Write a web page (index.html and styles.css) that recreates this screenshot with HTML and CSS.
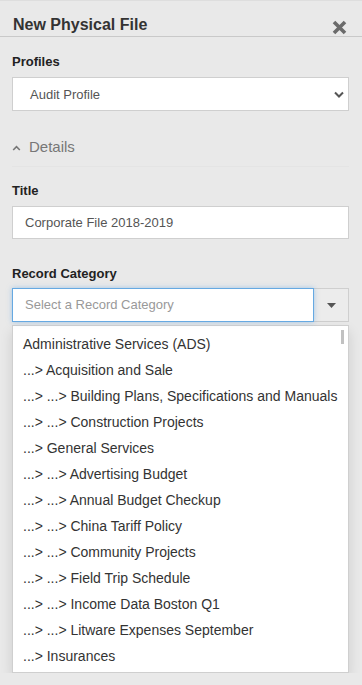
FILE: index.html
```html
<!DOCTYPE html>
<html lang="en">
<head>
  <meta charset="UTF-8" />
  <meta name="viewport" content="width=device-width, initial-scale=1" />
  <title>New Physical File</title>
  <link rel="stylesheet" href="styles.css">
</head>
<body>

  <div class="panel">
    <header class="panel-head">
      <h1>New Physical File</h1>
      <button class="close" aria-label="Close">
        <svg width="15" height="15" viewBox="0 0 15 15">
          <path d="M2 2 L13 13 M13 2 L2 13" stroke="#6b6b6b" stroke-width="3.6" fill="none" />
        </svg>
      </button>
    </header>

    <div class="panel-body">
      <div class="field">
        <label>Profiles</label>
        <div class="select">
          <span>Audit Profile</span>
          <svg width="10" height="7" viewBox="0 0 10 7">
            <path d="M1 1.5 L5 5.5 L9 1.5" stroke="#555" stroke-width="2" fill="none" />
          </svg>
        </div>
      </div>

      <div class="toggle">
        <svg width="9" height="6" viewBox="0 0 9 6">
          <path d="M1.2 5 L4.5 1.7 L7.8 5" stroke="#777" stroke-width="1.6" fill="none" />
        </svg>
        <span>Details</span>
      </div>

      <div class="field field-title">
        <label>Title</label>
        <div class="input">Corporate File 2018-2019</div>
      </div>

      <div class="field field-category">
        <label>Record Category</label>
        <div class="combo">
          <div class="combo-input">Select a Record Category</div>
          <div class="combo-btn">
            <svg width="9" height="5" viewBox="0 0 9 5"><path d="M0 0 L9 0 L4.5 5 Z" fill="#555" /></svg>
          </div>
        </div>
        <ul class="options">
          <li>Administrative Services (ADS)</li>
          <li>...&gt; Acquisition and Sale</li>
          <li>...&gt; ...&gt; Building Plans, Specifications and Manuals</li>
          <li>...&gt; ...&gt; Construction Projects</li>
          <li>...&gt; General Services</li>
          <li>...&gt; ...&gt; Advertising Budget</li>
          <li>...&gt; ...&gt; Annual Budget Checkup</li>
          <li>...&gt; ...&gt; China Tariff Policy</li>
          <li>...&gt; ...&gt; Community Projects</li>
          <li>...&gt; ...&gt; Field Trip Schedule</li>
          <li>...&gt; ...&gt; Income Data Boston Q1</li>
          <li>...&gt; ...&gt; Litware Expenses September</li>
          <li>...&gt; Insurances</li>
        </ul>
      </div>
    </div>
  </div>

</body>
</html>
```

FILE: styles.css
```css
body {
  margin: 0;
  font-family: 'Liberation Sans', Arial, sans-serif;
  background-color: #e9e9e9;
  color: #333;
  overflow: hidden;
}

.panel {
  border-top: 1px solid #dedede;
}

.panel-head {
  display: flex;
  justify-content: space-between;
  align-items: flex-start;
  padding: 14px 15px 1px 13px;
  border-bottom: 1px solid #c9c9c9;
}

.panel-head h1 {
  margin: 0;
  font-size: 16px;
  line-height: 20px;
  font-weight: bold;
  color: #333;
}

.close {
  margin-top: 5px;
  padding: 0;
  border: none;
  background: none;
  width: 15px;
  height: 15px;
}

.close svg {
  display: block;
}

.panel-body {
  padding: 0 13px 0 12px;
}

.field label {
  display: block;
  font-size: 13px;
  line-height: 16px;
  font-weight: bold;
  color: #222;
  margin-bottom: 7px;
}

.field:first-child {
  padding-top: 17px;
}

.select {
  display: flex;
  justify-content: space-between;
  align-items: center;
  height: 32px;
  padding: 0 4px 0 17px;
  background: #fff;
  border: 1px solid #cfcfcf;
  font-size: 13px;
  color: #555;
}

.toggle {
  display: flex;
  align-items: center;
  gap: 8px;
  margin-top: 27px;
  padding: 0 0 10px 0;
  border-bottom: 1px solid #e4e4e4;
  font-size: 15px;
  line-height: 18px;
  color: #777;
}

.toggle svg {
  margin-top: 1px;
}

.field-title {
  padding-top: 16px;
}

.field-title label {
  margin-bottom: 7px;
}

.input {
  height: 31px;
  line-height: 31px;
  padding: 0 12px;
  background: #fff;
  border: 1px solid #cfcfcf;
  font-size: 13px;
  color: #555;
}

.field-category {
  padding-top: 27px;
}

.field-category label {
  margin-bottom: 6px;
}

.combo {
  display: flex;
  height: 34px;
}

.combo-input {
  flex: 1;
  line-height: 32px;
  padding: 0 12px;
  background: #fff;
  border: 1px solid #66a9e2;
  box-shadow: 0 0 5px rgba(102, 169, 226, 0.55);
  font-size: 13px;
  color: #999;
  position: relative;
  z-index: 1;
}

.combo-btn {
  width: 34px;
  display: flex;
  align-items: center;
  justify-content: center;
  background: #ececec;
  border: 1px solid #cfcfcf;
  border-left: none;
}

.combo-btn svg {
  margin-left: 1px;
}

.options {
  position: relative;
  list-style: none;
  margin: 3px 0 0;
  padding: 5px 10px 3px 10px;
  height: 338px;
  overflow: hidden;
  background: #fff;
  border: 1px solid #cfcfcf;
  box-shadow: 0 6px 12px rgba(0, 0, 0, 0.12);
}

.options::after {
  content: '';
  position: absolute;
  top: 4px;
  right: 4px;
  width: 3px;
  height: 14px;
  background: #c1c1c1;
}

.options li {
  font-size: 14px;
  line-height: 26px;
  white-space: nowrap;
  color: #333;
}
```
